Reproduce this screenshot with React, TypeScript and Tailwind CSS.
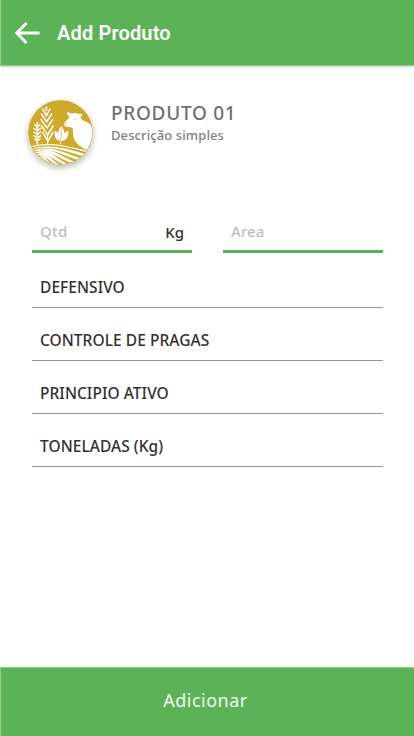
function FarmLogo() {
  return (
    <svg
      viewBox="24 29 195 195"
      className="h-[65px] w-[65px] shrink-0 rounded-full shadow-[0_3px_6px_rgba(0,0,0,0.28)]"
      aria-hidden="true"
    >
      <defs>
        <clipPath id="disc">
          <circle cx="121.5" cy="126.5" r="95" />
        </clipPath>
      </defs>
      <circle cx="121.5" cy="126.5" r="97.5" fill="#cea92b" />
      <g clipPath="url(#disc)">
        {/* tall wheat */}
        <g fill="none" stroke="#fff" strokeWidth="4.5" strokeLinecap="round">
          <path d="M79 50V60" strokeWidth="5" />
          <path d="M68 56L79 76L90 56" />
          <path d="M64 71L80 94L95 71" />
          <path d="M63 88L81 113L98 88" />
          <path d="M65 107L83 134L99 107" />
          <path d="M68 126L84 152L99 126" />
          <path d="M83 134V162" strokeWidth="3" />
        </g>
        {/* small wheat */}
        <g fill="none" stroke="#fff" strokeWidth="4.5" strokeLinecap="round">
          <path d="M52 96V162" strokeWidth="4" />
          <path d="M44 103L52 110L60 103" />
          <path d="M42 114L52 121L62 114" />
          <path d="M42 125L52 132L62 125" />
          <path d="M42 136L52 143L62 136" />
          <path d="M44 146L52 152L60 146" />
        </g>
        {/* leaves */}
        <g fill="#fff">
          <path d="M124 107C138 124 136 142 122 152C112 137 113 119 124 107Z" />
          <path d="M105 121C119 128 122 139 119 152C106 148 102 136 105 121Z" />
          <path d="M145 121C147 139 139 150 124 152C126 136 132 127 145 121Z" />
        </g>
        <path d="M122 148V162" stroke="#fff" strokeWidth="3" />
        <path d="M123 112Q127 130 121 153" fill="none" stroke="#cea92b" strokeWidth="1.8" />
        {/* cow */}
        <path
          d="M142 66C148 67 151 69 155 70C161 67 170 68 174 71C179 69 184 70 187 72C186 77 183 80 181 82C186 91 196 92 205 97C214 104 221 113 221 126V164L207 181C191 174 174 166 165 151C157 139 159 127 159 117C155 108 146 110 139 110C132 107 132 100 134 95C141 90 146 85 149 80C144 76 141 72 142 66Z"
          fill="#fff"
        />
        <path d="M163 86Q166 84 168 87Q166 89 163 88Z" fill="#cea92b" />
        <path d="M135 97L141 98" stroke="#cea92b" strokeWidth="2" />
        {/* ploughed field */}
        <g fill="#fff">
          <path d="M32 167Q80 156 125 165T212 183L209 188Q165 175 124 168T32 170Z" />
          <path d="M34 174Q84 163 128 173T206 194L202 202Q165 190 126 179T34 176Z" />
          <path d="M36 181Q84 167 124 183T194 207L188 214Q152 203 119 189T36 184Z" />
          <path d="M38 188Q82 171 116 191T178 218L168 223Q138 213 109 197T38 191Z" />
          <path d="M42 195Q78 177 105 198T156 225L145 229Q119 218 97 203T42 198Z" />
          <path d="M47 202Q74 184 92 202T131 228L118 230Q100 221 84 206T47 206Z" />
          <path d="M54 210Q70 192 80 206T104 226L92 226Q82 217 74 209T54 213Z" />
        </g>
      </g>
    </svg>
  );
}

const options = ["DEFENSIVO", "CONTROLE DE PRAGAS", "PRINCIPIO ATIVO", "TONELADAS (Kg)"];

export default function App() {
  return (
    <div className="flex h-[736px] w-[414px] flex-col overflow-hidden bg-white font-['Noto_Sans','Open_Sans',sans-serif]">
      <header className="flex h-[66px] shrink-0 items-center border-b border-l border-[#92cc8f] bg-[#5cb357] pl-3.5 shadow-[0_1px_2px_rgba(0,0,0,0.2)]">
        <svg viewBox="0 0 25 22" className="h-[22px] w-[25px]" fill="none" stroke="#fff" strokeWidth="2.8" aria-hidden="true">
          <path d="M24.5 11H2.5M11.5 1L1.8 11L11.5 21" />
        </svg>
        <h1 className="ml-[17px] pt-px font-['Roboto',sans-serif] text-[20px] leading-6 font-semibold tracking-[0.15px] text-white">Add Produto</h1>
      </header>

      <main className="flex-1">
        <section className="flex pt-[34px] pl-7">
          <FarmLogo />
          <div className="ml-[18px]">
            <h2 className="text-[19px] leading-[26px] font-medium tracking-[0.7px] text-[#707070]">PRODUTO 01</h2>
            <p className="text-[13px] leading-[18px] font-medium tracking-[0.1px] text-[#808080]">Descrição simples</p>
          </div>
        </section>

        <section className="mt-[47px] flex gap-[31px] pl-[31.5px] text-[15px] leading-[21px] font-medium">
          <div className="flex h-[41px] w-[160px] items-center justify-between border-b-3 border-[#5eac5b] pr-[7.5px] pl-[8.5px]">
            <span className="tracking-[0.3px] text-[#bcbcbc]">Qtd</span>
            <span className="pt-0.5 text-[#303030]">Kg</span>
          </div>
          <div className="flex h-[41px] w-[160px] items-center border-b-3 border-[#5eac5b] pl-[8.5px]">
            <span className="tracking-[0.1px] text-[#bcbcbc]">Area</span>
          </div>
        </section>

        <ul className="ml-[31.5px] w-[351px] pt-0.5">
          {options.map((option) => (
            <li key={option} className="flex h-[53px] items-end border-b border-[#929292] pb-[9px] pl-[8.5px] text-[15.5px] leading-[21px] font-medium tracking-[0.05px] text-[#303030]">
              {option}
            </li>
          ))}
        </ul>
      </main>

      <button className="h-[69px] shrink-0 border-t border-l border-[#92cc8f] bg-[#5cb357] pr-1 pb-[3px] text-[18px] tracking-[0.5px] text-[#f2faf1]">
        Adicionar
      </button>
    </div>
  );
}
